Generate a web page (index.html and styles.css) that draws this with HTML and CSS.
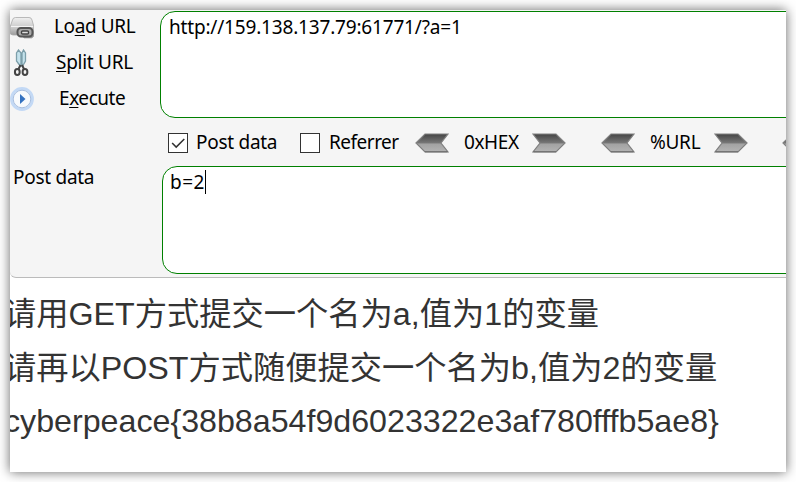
FILE: index.html
```html
<!DOCTYPE html>
<html lang="zh-CN">
<head>
<meta charset="utf-8">
<title>HackBar</title>
<link rel="stylesheet" href="styles.css">
</head>
<body>
<svg class="defs" width="0" height="0" aria-hidden="true">
  <defs>
    <linearGradient id="steel" x1="0" y1="0" x2="0" y2="1">
      <stop offset="0" stop-color="#444"/><stop offset=".5" stop-color="#777"/>
      <stop offset=".55" stop-color="#a2a2a2"/><stop offset="1" stop-color="#b4b4b4"/>
    </linearGradient>
    <linearGradient id="disk" x1="0" y1="0" x2="0" y2="1">
      <stop offset="0" stop-color="#f0f0f0"/><stop offset=".5" stop-color="#c9c9c9"/><stop offset="1" stop-color="#888"/>
    </linearGradient>
    <symbol id="arrow" viewBox="0 0 34 20">
      <path d="M1 10 10 1H33L26 10 33 19H10Z" fill="url(#steel)" stroke="#808080" stroke-width="1.2"/>
      <path d="M10 18.8H32.5" stroke="#666" stroke-width="1"/>
    </symbol>
  </defs>
</svg>
<main class="window">
  <section class="bar">
    <div class="row top">
      <nav class="actions">
        <div class="action">
          <svg class="icon" viewBox="0 0 24 24"><path d="M2.500 5Q3 2.500 5.500 2.500H19Q21.500 2.500 22 5L24 12V21L22 23H14L12 20H3Q0 20 0 17V12Z" fill="url(#disk)" stroke="#aaa" stroke-width=".8"/><path d="M1 11.500H23" stroke="#f4f4f4"/><rect x="7.500" y="13" width="15" height="8.500" rx="3.500" fill="#aaa" stroke="#555" stroke-width="2"/><rect x="11.500" y="16" width="7" height="3" rx="1" fill="#ddd" stroke="#444" stroke-width="1.400"/></svg>
          <span class="label load">Lo<u>a</u>d URL</span>
        </div>
        <div class="action">
          <svg class="icon" viewBox="0 0 24 28"><path d="M10.300 17 6.500 12V4L8.500 1 11 4V17ZM12.700 17 15.500 12V4L13.500 1 12 4V17Z" fill="#c4e2ec" stroke="#7d9faa" stroke-width="1.300"/><path d="M10.500 16 8.500 20M12 16 14 20" stroke="#444" stroke-width="2"/><ellipse cx="7.300" cy="23" rx="2.400" ry="3" fill="none" stroke="#444" stroke-width="2"/><ellipse cx="15" cy="23" rx="2.400" ry="3" fill="none" stroke="#444" stroke-width="2"/></svg>
          <span class="label split"><u>S</u>plit URL</span>
        </div>
        <div class="action">
          <svg class="icon" viewBox="0 0 24 24"><circle cx="12" cy="12" r="10.500" fill="#f7fafd" stroke="#c3d9f5" stroke-width="2.800"/><circle cx="12" cy="12" r="8.800" fill="none" stroke="#a9bfdf" stroke-width="1"/><path d="M10 7 15.500 12 10 17Z" fill="#3472c0"/></svg>
          <span class="label exec">E<u>x</u>ecute</span>
        </div>
      </nav>
      <div class="field url"><span class="text">http://159.138.137.79:61771/?a=1</span></div>
    </div>
    <div class="options">
      <span class="check"><svg viewBox="0 0 20 20"><path d="M3.500 10 8 14.500 17 5.500" fill="none" stroke="#333" stroke-width="1.700"/></svg></span>
      <span class="label post">Post data</span>
      <span class="check second"></span>
      <span class="label ref">Referrer</span>
      <svg class="arrow a1"><use href="#arrow"/></svg>
      <span class="label hex">0xHEX</span>
      <svg class="arrow right"><use href="#arrow"/></svg>
      <svg class="arrow a2"><use href="#arrow"/></svg>
      <span class="label pct">%URL</span>
      <svg class="arrow right"><use href="#arrow"/></svg>
      <svg class="arrow a3"><use href="#arrow"/></svg>
    </div>
    <div class="row bottom">
      <span class="label side">Post data</span>
      <div class="field data"><span class="text">b=2</span><i class="caret"></i></div>
    </div>
  </section>
  <section class="page">
    <h1>请用GET方式提交一个名为a,值为1的变量</h1>
    <h1>请再以POST方式随便提交一个名为b,值为2的变量</h1>
    <h1 class="flag">cyberpeace{38b8a54f9d6023322e3af780fffb5ae8}</h1>
  </section>
</main>
</body>
</html>
```
FILE: styles.css
```css
* { box-sizing: border-box; }
body { margin: 0; padding: 10px; height: 482px; overflow: hidden; background: #fff; }
.defs { position: absolute; }
.window { width: 776px; height: 462px; overflow: hidden; background: #fff; box-shadow: 0 0 11px rgba(0,0,0,.6); }
.bar { height: 268px; background: #f5f5f5; border-bottom: 1px solid #bbb; border-bottom-left-radius: 6px; overflow: hidden; font: 19px/26px "Noto Sans", sans-serif; color: #000; }
.row { display: flex; }
.top { height: 109px; padding-top: 1px; }
.actions { width: 150px; flex: none; }
.action { display: flex; align-items: center; height: 30px; }
.action:first-child { height: 29px; }
.action:nth-child(2) { height: 44px; }
.action:nth-child(3) { height: 28px; }
.icon { width: 24px; height: 28px; flex: none; margin-top: 2px; }
.label, .text { white-space: nowrap; flex: none; }
.label { letter-spacing: -.28px; }
.label u { text-underline-offset: 2px; text-decoration-thickness: 1px; }
.load { margin-left: 20px; letter-spacing: -.38px; }
.split { margin-left: 22px; }
.exec { margin-left: 25px; letter-spacing: -.45px; }
.field { flex: none; display: flex; width: 680px; height: 108px; border: 1px solid #008000; border-radius: 15px; background: #fff; }
.url { height: 107px; padding: 2px 8px; letter-spacing: -.18px; }
.options { display: flex; align-items: center; height: 47px; padding-left: 158px; }
.options .label { margin-top: -2px; }
.check { flex: none; width: 20px; height: 20px; border: 1px solid #333; background: #fff; }
.check svg { display: block; width: 18px; height: 18px; }
.post { width: 81px; margin-left: 8px; }
.check.second { margin-left: 23px; }
.ref { width: 70px; margin-left: 9px; letter-spacing: -.5px; }
.arrow { flex: none; width: 34px; height: 20px; }
.right { transform: scaleX(-1); }
.a1 { margin-left: 16px; }
.hex { width: 55px; margin: 0 13px 0 15px; letter-spacing: -.4px; }
.a2 { margin-left: 35px; }
.pct { width: 50px; margin: 0 14px 0 15px; }
.a3 { margin-left: 34px; }
.side { width: 149px; margin: -2px 0 0 3px; }
.data { padding: 3px 7px; }
.data .text { letter-spacing: .5px; margin-top: -1px; }
.caret { width: 1px; height: 24px; background: #000; }
.page { padding-top: 10px; margin-left: -6px; }
h1 { margin: 0; font: 400 32.250px/53.500px "Liberation Sans", "Noto Sans CJK SC", sans-serif; color: #333; white-space: nowrap; }
.flag { font-size: 32.200px; }
```
